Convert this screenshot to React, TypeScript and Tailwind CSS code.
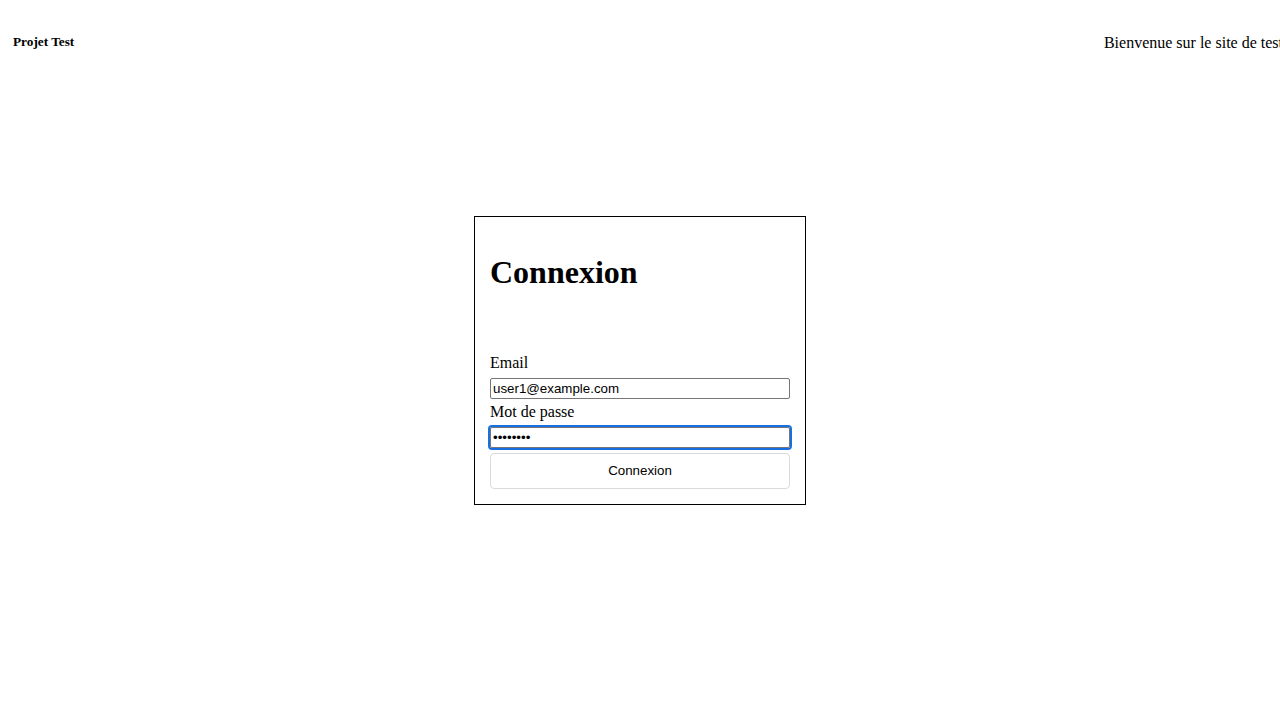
export default function App() {
  return (
    <div className="grid h-[720px] w-full overflow-hidden bg-white text-black [font-family:'Liberation_Serif',serif]">
      <header className="col-start-1 row-start-1 flex h-[84px] items-center justify-between self-start pl-[13px]">
        <h5 className="text-[13.28px] font-bold">Projet Test</h5>
        <p className="mr-[-3px] mt-[1px] whitespace-nowrap text-[16px]">Bienvenue sur le site de test</p>
      </header>

      <main className="col-start-1 row-start-1 flex items-center justify-center">
        <div className="flex w-[332px] flex-col border border-black p-[15px]">
          <h1 className="mt-[22px] text-[32px] font-bold leading-[37px]">Connexion</h1>
          <form className="mt-[63px] flex flex-col" onSubmit={(e) => e.preventDefault()}>
            <label htmlFor="email" className="text-[16px] leading-[18px]">Email</label>
            <input
              id="email"
              type="email"
              defaultValue="user1@example.com"
              className="mt-[6px] h-[21px] w-[300px] rounded-[2px] border border-[#767676] px-[2px] text-[13.33px] [font-family:'Liberation_Sans',Arial,sans-serif]"
            />
            <label htmlFor="password" className="mt-[4px] text-[16px] leading-[18px]">Mot de passe</label>
            <input
              id="password"
              type="password"
              defaultValue="password"
              className="mt-[6px] h-[21px] w-[300px] rounded-[2px] border border-[#767676] px-[2px] text-[13.33px] outline-2 outline-[#1a6fe0] [font-family:'Liberation_Sans',Arial,sans-serif]"
            />
            <button
              type="submit"
              className="mt-[5px] h-[36px] w-[300px] rounded-[4px] border border-[#dadada] bg-white text-[13.33px] [font-family:'Liberation_Sans',Arial,sans-serif]"
            >
              Connexion
            </button>
          </form>
        </div>
      </main>
    </div>
  );
}
